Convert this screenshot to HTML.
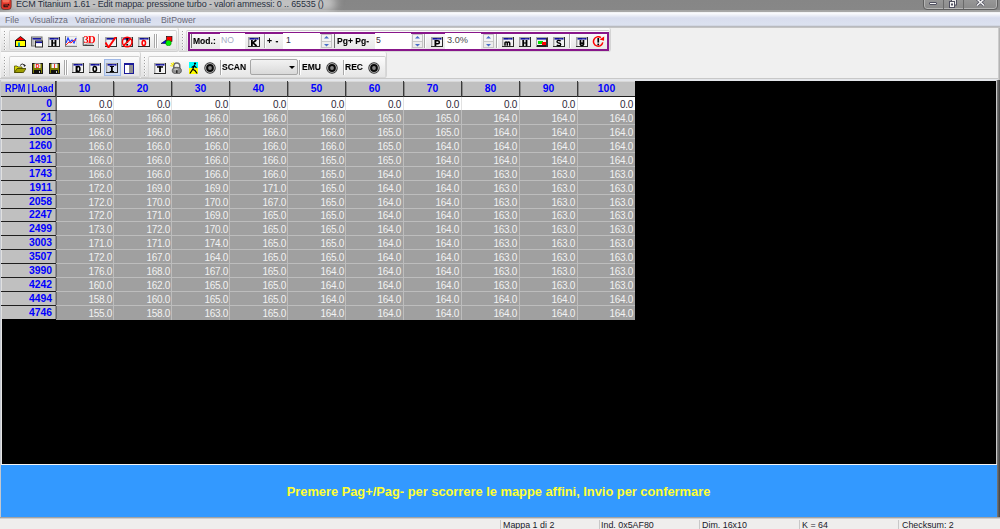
<!DOCTYPE html>
<html><head><meta charset="utf-8">
<style>
*{margin:0;padding:0;box-sizing:border-box}
html,body{width:1000px;height:529px;overflow:hidden;background:#f0f0f0;font-family:"Liberation Sans",sans-serif;position:relative}
.a{position:absolute}
#title{left:0;top:0;width:1000px;height:12px;background:linear-gradient(#868686 0,#878787 10px,#a4a4a4 10.5px,#a8a8a8 12px);overflow:hidden}
#ttext{left:16px;top:-1px;font-size:9px;letter-spacing:-0.14px;line-height:10px;color:#283040;white-space:nowrap}
#menu{left:0;top:12px;width:1000px;height:16px;background:linear-gradient(#e8e9ec 0,#fbfcfe 1px,#eef0f8 3px,#d8ddee 6px,#dce2f0 13px,#c8ccd6 14px,#a8a8a8 15px,#a8a8a8 16px)}
.mi{top:15px;font-size:8.7px;line-height:10px;color:#6a6a78;white-space:nowrap}
#tb{left:0;top:28px;width:1000px;height:52px;background:#f0f0f0}
.box{background:linear-gradient(#fbfbfb,#ececec 60%,#e2e2e2);border-right:1px solid #d4d4d4;border-bottom:1px solid #cfcfcf;border-radius:0 2px 3px 0}
.panel{background:linear-gradient(#fdfdfd,#f0f0f0 50%,#e6e6e6);border:1px solid #d8d8d8;border-top-color:#cfcfcf;border-radius:2px}
.grip{width:2px;background:repeating-linear-gradient(90deg,#a0a0a0 0,#a0a0a0 1px,#fff 1px,#fff 2px);-webkit-mask:repeating-linear-gradient(#000 0,#000 1px,transparent 1px,transparent 3px)}
.ht{color:#0000ff;font-weight:bold;font-size:10.4px;line-height:13px;white-space:nowrap}
.dt,.dt0{font-size:10px;letter-spacing:-0.3px;line-height:13px;text-align:right;white-space:nowrap}
.dt{color:#f2f2f2}
.dt0{color:#2e2838}
#black{left:2px;top:81px;width:994px;height:383px;background:#000}
#banner{left:1px;top:464px;width:996px;height:53px;background:#3399ff;border-top:1px solid #f4f4f4}
#btext{left:0;top:19px;width:995px;text-align:center;color:#ffff33;font-weight:bold;font-size:12.85px;line-height:16px}
#frameR{left:996px;top:80px;width:4px;height:437px;background:linear-gradient(90deg,#c8c8c8 0,#c8c8c8 1px,#7a7a7a 1px,#404040 4px)}
#frameL{left:0;top:80px;width:2px;height:438px;background:linear-gradient(90deg,#c4c8d0 0,#c4c8d0 1px,#e4e4e4 1px)}
#status{left:0;top:517px;width:1000px;height:12px;background:linear-gradient(#a4a4a4 0,#a4a4a4 1px,#cfcfcf 1px,#cfcfcf 2px,#efeeed 2px)}
.st{top:520px;font-size:8.9px;line-height:10px;color:#1a1a2a;white-space:nowrap}
.sd{top:520px;width:1px;height:9px;background:#c8c8c8}
.ico{filter:blur(0.25px)}
.vsep{width:2px;border-left:1px solid #a8a8a8;border-right:1px solid #ffffff}
.lbl{font-weight:bold;font-size:9.7px;color:#000;-webkit-text-stroke:0.1px #000;white-space:nowrap;line-height:10px;transform:scaleX(0.88);transform-origin:0 0}
.txt{font-size:8.6px;white-space:nowrap;line-height:10px}
.tbox{background:#fff}
.combo{border:1px solid #a6a6a6;border-radius:2px;background:linear-gradient(#f2f2f2,#e6e6e6 50%,#d9d9d9)}
</style></head><body>
<div id="title" class="a"><div class="a" style="left:6px;top:-6px;width:330px;height:18px;border-radius:9px;background:rgba(215,215,215,0.75);filter:blur(4px)"></div><div id="ttext" class="a">ECM Titanium 1.61 - Edit mappa: pressione turbo - valori ammessi: 0 .. 65535 ()</div></div>
<div id="menu" class="a"></div>
<svg class="a" style="left:0;top:0;filter:blur(0.3px)" width="13" height="11" viewBox="0 0 13 11"><rect x="1.2" y="-2" width="10" height="11.5" rx="3" fill="#e4362a" stroke="#5a2a24" stroke-width="0.7"/><rect x="2.5" y="-1" width="7" height="3.5" rx="1.5" fill="#f88a70" opacity="0.7"/><path d="M3.5,6.8 L8.2,6.8 M4.2,5 L8.8,5 L8.4,4 M4,4.5 Q3.8,6.8 4.5,6.8" fill="none" stroke="#1a1010" stroke-width="1.1"/></svg>
<div class="a" style="left:923px;top:-3px;width:75px;height:13px;border:1px solid #5e5e5e;border-radius:0 0 4px 4px;background:linear-gradient(#9a9a9a,#8a8a8a);box-shadow:inset 0 0 0 1px #b4b4b4"></div>
<div class="a" style="left:943px;top:0;width:1px;height:9px;background:#6a6a6a"></div>
<div class="a" style="left:963px;top:0;width:1px;height:9px;background:#6a6a6a"></div>
<div class="a" style="left:929px;top:2px;width:8px;height:3px;background:#f4f4f4;border:1px solid #505060;border-radius:1px"></div>
<svg class="a" style="left:948px;top:0" width="10" height="8" viewBox="0 0 10 8"><rect x="3.5" y="-1" width="5" height="6" fill="#e8e8e8" stroke="#505060"/><rect x="1.5" y="1.5" width="5" height="6" fill="#f4f4f4" stroke="#505060"/><rect x="3" y="3.5" width="2" height="2" fill="#505060"/></svg>
<svg class="a" style="left:975px;top:-1px" width="11" height="8" viewBox="0 0 11 8"><path d="M2,0 L9,6.5 M9,0 L2,6.5" stroke="#505060" stroke-width="3"/><path d="M2,0 L9,6.5 M9,0 L2,6.5" stroke="#f4f4f4" stroke-width="1.5"/></svg>
<div class="a mi" style="left:5px">File</div>
<div class="a mi" style="left:29px">Visualizza</div>
<div class="a mi" style="left:75px">Variazione manuale</div>
<div class="a mi" style="left:161px">BitPower</div>
<div id="tb" class="a"></div>
<div class="a" style="left:0;top:27px;width:1000px;height:1px;background:#c4c4c4"></div>
<div class="a" style="left:0;top:78px;width:1000px;height:1px;background:#c8c8c8"></div>
<div class="a" style="left:0;top:79px;width:1000px;height:2px;background:#e4e6ea"></div>
<div class="a box" style="left:1px;top:28px;width:178px;height:24px"></div>
<div class="a box" style="left:179px;top:28px;width:432px;height:24px"></div>
<div class="a box" style="left:1px;top:52px;width:140px;height:26px"></div>
<div class="a box" style="left:141px;top:52px;width:246px;height:26px"></div>
<div class="a grip" style="left:4px;top:31px;height:19px"></div>
<div class="a panel" style="left:9px;top:30px;width:168px;height:20px"></div>
<div class="a grip" style="left:182px;top:31px;height:19px"></div>
<div class="a panel" style="left:186px;top:30px;width:424px;height:22px"></div>
<div class="a" style="left:188px;top:32px;width:421px;height:19px;border:2px solid #88168a"></div>
<div class="a grip" style="left:4px;top:57px;height:19px"></div>
<div class="a panel" style="left:9px;top:56px;width:131px;height:21px"></div>
<div class="a grip" style="left:144px;top:57px;height:19px"></div>
<div class="a panel" style="left:148px;top:56px;width:238px;height:22px"></div>
<div id="black" class="a"></div>
<div class="a" style="left:998px;top:28px;width:2px;height:53px;background:linear-gradient(90deg,#d8d8d8,#a8a8a8)"></div>
<div id="frameL" class="a"></div>
<div id="frameR" class="a"></div>
<svg class="a ico" style="left:15px;top:36px" width="12" height="12" viewBox="0 0 12 12" ><polygon points="0.5,4.5 5.5,0.5 10.5,4.5" fill="#ff0000" stroke="#000" stroke-width="0.8"/><rect x="0.5" y="4.5" width="10" height="6" fill="#ffff00" stroke="#000" stroke-width="1"/><rect x="3" y="6.5" width="2" height="4" fill="#00a0a0"/></svg>
<svg class="a ico" style="left:31px;top:36px" width="12" height="12" viewBox="0 0 12 12" ><rect x="0.5" y="1" width="10.5" height="9" fill="#d0d0d0" stroke="#6a6a6a" stroke-width="1"/><rect x="1.5" y="2" width="8.5" height="1.6" fill="#1a1aa0"/><rect x="1.5" y="3.6" width="1" height="6" fill="#a0a0a0"/><rect x="4.5" y="5" width="7" height="6" fill="#fff" stroke="#282828" stroke-width="1"/><rect x="5" y="5.5" width="6" height="1.6" fill="#10109a"/></svg>
<svg class="a ico" style="left:48px;top:37px" width="12" height="10" viewBox="0 0 12 10" ><rect x="0" y="0" width="12" height="10" fill="#2a2a2a"/><rect x="0" y="0" width="11" height="9" fill="#a4a4a4"/><rect x="1" y="1" width="10" height="8" fill="#d4d4d4"/><rect x="2" y="1" width="9" height="8" fill="#f2f2f2"/><rect x="1.5" y="1" width="9" height="1.6" fill="#10109a"/><rect x="6" y="1.8" width="3" height="0.8" fill="#9a9ad0"/><g fill="#000"><rect x="3.3" y="3" width="1.8" height="6"/><rect x="6.6" y="3" width="1.8" height="6"/><rect x="4.5" y="5.4" width="2.5" height="1.2"/></g></svg>
<svg class="a ico" style="left:65px;top:36px" width="12" height="11" viewBox="0 0 12 11" ><rect x="0" y="0" width="12" height="11" fill="#d8d8d8"/><rect x="1" y="1" width="10" height="8" fill="#f0f0f0"/><rect x="0" y="0" width="1" height="11" fill="#707070"/><rect x="0" y="10" width="12" height="1" fill="#808080"/><polyline points="1,7 3,2 5,6 7,4 9,7 11,2" fill="none" stroke="#2040ff" stroke-width="1.2"/><polyline points="1,9 4,6 6,7 9,4 11,4" fill="none" stroke="#ff2020" stroke-width="1"/></svg>
<svg class="a ico" style="left:82px;top:35px" width="13" height="12" viewBox="0 0 13 12" ><path d="M1.2,2 L1.2,10.5 L12,10.5" fill="none" stroke="#303030" stroke-width="0.9"/><path d="M2,10 Q5,8.5 11,9" fill="none" stroke="#707070" stroke-width="0.8"/><text x="7.3" y="8.2" text-anchor="middle" font-family="Liberation Serif" font-weight="bold" font-size="10.5" fill="#ff0000" letter-spacing="-0.6">3D</text></svg>
<div class="a vsep" style="left:98px;top:34px;height:14px"></div>
<svg class="a ico" style="left:105px;top:37px" width="13" height="12" viewBox="0 0 13 12" ><rect x="0" y="0" width="12" height="10" fill="#303030"/><rect x="0" y="0" width="11" height="9" fill="#a4a4a4"/><rect x="1" y="1" width="10" height="8" fill="#d4d4d4"/><rect x="2" y="1" width="9" height="8" fill="#f0f0f0"/><rect x="1.5" y="1" width="8" height="1.6" fill="#10109a"/><path d="M0.5,5.5 L3.5,10.5 L11.5,-1" fill="none" stroke="#ff0000" stroke-width="1.9" stroke-linejoin="bevel"/></svg>
<svg class="a ico" style="left:121px;top:36px" width="13" height="12" viewBox="0 0 13 12" ><rect x="0.5" y="1" width="11.5" height="10" fill="#303030"/><rect x="0.5" y="1" width="10.5" height="9" fill="#a4a4a4"/><rect x="1.5" y="2" width="9.5" height="8" fill="#ececec"/><rect x="2" y="2" width="8" height="1.6" fill="#10109a"/><rect x="5.3" y="2" width="1.8" height="4.8" fill="#000"/><rect x="5.3" y="8" width="1.8" height="1.6" fill="#000"/><circle cx="6.2" cy="6" r="4.8" fill="none" stroke="#ff0000" stroke-width="1.5"/><path d="M9.6,2.6 L2.6,9.6" stroke="#ff0000" stroke-width="1.5"/></svg>
<svg class="a ico" style="left:138px;top:37px" width="12" height="10" viewBox="0 0 12 10" ><rect x="0" y="0" width="12" height="10" fill="#2a2a2a"/><rect x="0" y="0" width="11" height="9" fill="#a4a4a4"/><rect x="1" y="1" width="10" height="8" fill="#d4d4d4"/><rect x="2" y="1" width="9" height="8" fill="#f2f2f2"/><rect x="1.5" y="1" width="9" height="1.6" fill="#10109a"/><rect x="6" y="1.8" width="3" height="0.8" fill="#9a9ad0"/><g fill="#ff0000"><ellipse cx="5.8" cy="6" rx="1.7" ry="2.5" fill="none" stroke="#ff0000" stroke-width="1.5"/></g></svg>
<div class="a vsep" style="left:154px;top:34px;height:14px"></div>
<div class="a vsep" style="left:156px;top:34px;height:14px"></div>
<svg class="a ico" style="left:161px;top:36px" width="12" height="11" viewBox="0 0 12 11" ><polygon points="0,7.5 5,4 5,7.5" fill="#0000ff" stroke="#000" stroke-width="0.5"/><rect x="5.5" y="0.5" width="5.5" height="5" fill="#ff0000" stroke="#000" stroke-width="0.6"/><circle cx="7.5" cy="7" r="2.8" fill="#00ee00" stroke="#006000" stroke-width="0.4"/></svg>
<div class="a" style="left:191px;top:34px;width:1px;height:14px;background:#707070"></div>
<div class="a lbl" style="left:193px;top:36px">Mod.:</div>
<div class="a tbox" style="left:220px;top:33px;width:25px;height:16px"></div>
<div class="a txt" style="left:221px;top:35px;color:#a4acc4">NO</div>
<svg class="a ico" style="left:248px;top:37px" width="12" height="10" viewBox="0 0 12 10" ><rect x="0" y="0" width="12" height="10" fill="#2a2a2a"/><rect x="0" y="0" width="11" height="9" fill="#a4a4a4"/><rect x="1" y="1" width="10" height="8" fill="#d4d4d4"/><rect x="2" y="1" width="9" height="8" fill="#f2f2f2"/><rect x="1.5" y="1" width="9" height="1.6" fill="#10109a"/><rect x="6" y="1.8" width="3" height="0.8" fill="#9a9ad0"/><g fill="#000"><rect x="3" y="3" width="1.8" height="6"/><path d="M4.2,6.3 L8.3,3 M4.8,5.6 L8.6,9" stroke="#000" stroke-width="1.7" fill="none"/></g></svg>
<div class="a vsep" style="left:264px;top:34px;height:14px"></div>
<div class="a lbl" style="left:267px;top:36px;letter-spacing:0.6px">+ -</div>
<div class="a tbox" style="left:283px;top:33px;width:37px;height:16px"></div>
<div class="a txt" style="left:286px;top:35px;color:#2a2a3a">1</div>
<svg class="a ico" style="left:321px;top:34px" width="11" height="14" viewBox="0 0 11 14" ><rect x="0.5" y="0.5" width="10" height="13" fill="#ececec" stroke="#c4c4c4"/><rect x="1" y="1" width="9" height="6" fill="#f4f4f4"/><rect x="1" y="7" width="9" height="1" fill="#c8c8c8"/><polygon points="3.0,4.5 8.0,4.5 5.5,2" fill="#4a6ec8"/><polygon points="3.0,10 8.0,10 5.5,12.5" fill="#4a6ec8"/></svg>
<div class="a" style="left:334px;top:34px;width:1px;height:14px;background:#707070"></div>
<div class="a lbl" style="left:337px;top:36px">Pg+ Pg-</div>
<div class="a tbox" style="left:375px;top:33px;width:36px;height:16px"></div>
<div class="a txt" style="left:376px;top:35px;color:#3a2a3a">5</div>
<svg class="a ico" style="left:412px;top:34px" width="11" height="14" viewBox="0 0 11 14" ><rect x="0.5" y="0.5" width="10" height="13" fill="#ececec" stroke="#c4c4c4"/><rect x="1" y="1" width="9" height="6" fill="#f4f4f4"/><rect x="1" y="7" width="9" height="1" fill="#c8c8c8"/><polygon points="3.0,4.5 8.0,4.5 5.5,2" fill="#4a6ec8"/><polygon points="3.0,10 8.0,10 5.5,12.5" fill="#4a6ec8"/></svg>
<div class="a vsep" style="left:424px;top:34px;height:14px"></div>
<svg class="a ico" style="left:431px;top:37px" width="12" height="10" viewBox="0 0 12 10" ><rect x="0" y="0" width="12" height="10" fill="#2a2a2a"/><rect x="0" y="0" width="11" height="9" fill="#a4a4a4"/><rect x="1" y="1" width="10" height="8" fill="#d4d4d4"/><rect x="2" y="1" width="9" height="8" fill="#f2f2f2"/><rect x="1.5" y="1" width="9" height="1.6" fill="#10109a"/><rect x="6" y="1.8" width="3" height="0.8" fill="#9a9ad0"/><g fill="#000"><rect x="3.5" y="3" width="1.8" height="6"/><path d="M4.5,3.8 L6.8,3.8 Q8.4,3.8 8.4,5.3 Q8.4,6.8 6.8,6.8 L4.5,6.8" fill="none" stroke="#000" stroke-width="1.5"/></g></svg>
<div class="a tbox" style="left:445px;top:33px;width:36px;height:16px"></div>
<div class="a txt" style="left:447px;top:35px;color:#4a4a4a;font-size:9.2px">3.0%</div>
<svg class="a ico" style="left:483px;top:34px" width="11" height="14" viewBox="0 0 11 14" ><rect x="0.5" y="0.5" width="10" height="13" fill="#ececec" stroke="#c4c4c4"/><rect x="1" y="1" width="9" height="6" fill="#f4f4f4"/><rect x="1" y="7" width="9" height="1" fill="#c8c8c8"/><polygon points="3.0,4.5 8.0,4.5 5.5,2" fill="#4a6ec8"/><polygon points="3.0,10 8.0,10 5.5,12.5" fill="#4a6ec8"/></svg>
<div class="a vsep" style="left:496px;top:34px;height:14px"></div>
<svg class="a ico" style="left:502px;top:37px" width="12" height="10" viewBox="0 0 12 10" ><rect x="0" y="0" width="12" height="10" fill="#2a2a2a"/><rect x="0" y="0" width="11" height="9" fill="#a4a4a4"/><rect x="1" y="1" width="10" height="8" fill="#d4d4d4"/><rect x="2" y="1" width="9" height="8" fill="#f2f2f2"/><rect x="1.5" y="1" width="9" height="1.6" fill="#10109a"/><rect x="6" y="1.8" width="3" height="0.8" fill="#9a9ad0"/><g fill="#000"><path d="M3,8.8 L3,5.8 Q3,5 4.1,5 Q5.3,5 5.3,5.9 L5.3,8.8 M5.3,5.9 Q5.3,5 6.5,5 Q7.7,5 7.7,5.9 L7.7,8.8" fill="none" stroke="#000" stroke-width="1.5"/></g></svg>
<svg class="a ico" style="left:519px;top:37px" width="12" height="10" viewBox="0 0 12 10" ><rect x="0" y="0" width="12" height="10" fill="#2a2a2a"/><rect x="0" y="0" width="11" height="9" fill="#a4a4a4"/><rect x="1" y="1" width="10" height="8" fill="#d4d4d4"/><rect x="2" y="1" width="9" height="8" fill="#f2f2f2"/><rect x="1.5" y="1" width="9" height="1.6" fill="#10109a"/><rect x="6" y="1.8" width="3" height="0.8" fill="#9a9ad0"/><g fill="#000"><rect x="3.3" y="3" width="1.8" height="6"/><rect x="6.6" y="3" width="1.8" height="6"/><rect x="4.5" y="5.4" width="2.5" height="1.2"/></g></svg>
<svg class="a ico" style="left:536px;top:37px" width="12" height="10" viewBox="0 0 12 10" ><rect x="0" y="0" width="12" height="10" fill="#7a7a7a"/><rect x="0" y="0" width="11" height="9" fill="#a8a8a8"/><rect x="1" y="8" width="11" height="2" fill="#202020"/><rect x="10" y="1" width="2" height="9" fill="#303030"/><rect x="1" y="1" width="9" height="7" fill="#f0f0f0"/><rect x="1" y="1" width="9" height="1.6" fill="#1a1aa0"/><rect x="2" y="4" width="5" height="3" fill="#00e000"/><rect x="6" y="5" width="4" height="3" fill="#ff0000"/></svg>
<svg class="a ico" style="left:553px;top:37px" width="12" height="10" viewBox="0 0 12 10" ><rect x="0" y="0" width="12" height="10" fill="#2a2a2a"/><rect x="0" y="0" width="11" height="9" fill="#a4a4a4"/><rect x="1" y="1" width="10" height="8" fill="#d4d4d4"/><rect x="2" y="1" width="9" height="8" fill="#f2f2f2"/><rect x="1.5" y="1" width="9" height="1.6" fill="#10109a"/><rect x="6" y="1.8" width="3" height="0.8" fill="#9a9ad0"/><g fill="#000"><path d="M7.6,4.2 Q7.2,3.4 5.8,3.4 Q4,3.4 4,4.7 Q4,5.8 5.8,6 Q7.7,6.2 7.7,7.4 Q7.7,8.6 5.8,8.6 Q4.3,8.6 3.8,7.8" fill="none" stroke="#000" stroke-width="1.4"/></g></svg>
<div class="a vsep" style="left:569px;top:34px;height:14px"></div>
<svg class="a ico" style="left:576px;top:37px" width="12" height="10" viewBox="0 0 12 10" ><rect x="0" y="0" width="12" height="10" fill="#2a2a2a"/><rect x="0" y="0" width="11" height="9" fill="#a4a4a4"/><rect x="1" y="1" width="10" height="8" fill="#d4d4d4"/><rect x="2" y="1" width="9" height="8" fill="#f2f2f2"/><rect x="1.5" y="1" width="9" height="1.6" fill="#10109a"/><rect x="6" y="1.8" width="3" height="0.8" fill="#9a9ad0"/><g fill="#000"><rect x="3.6" y="3" width="1.7" height="4.5"/><rect x="6.6" y="3" width="1.7" height="4.5"/><ellipse cx="5.95" cy="7.3" rx="1.6" ry="1.2" fill="none" stroke="#000" stroke-width="1.5"/></g></svg>
<svg class="a ico" style="left:592px;top:36px" width="13" height="12" viewBox="0 0 13 12" ><path d="M10.8,6.4 A4.7,4.7 0 1 1 8.9,1.6" fill="none" stroke="#ff0000" stroke-width="1.5"/><polygon points="7.6,3.4 12.2,0.4 12,4.8" fill="#ff0000"/><rect x="5.4" y="2" width="1.7" height="4.6" fill="#000"/><rect x="5.4" y="7.6" width="1.7" height="1.7" fill="#000"/></svg>
<svg class="a ico" style="left:14px;top:63px" width="12" height="10" viewBox="0 0 12 10" ><path d="M0.5,3 L3,3 L4,4 L8,4 L8,9.5 L0.5,9.5 Z" fill="#d8d800" stroke="#505000" stroke-width="0.8"/><path d="M0.5,9.5 L3,5.5 L12,5.5 L9.5,9.5 Z" fill="#a0a000" stroke="#404000" stroke-width="0.8"/><path d="M6,2.5 Q8,-0.5 10.5,2" fill="none" stroke="#303030" stroke-width="1"/><polygon points="9.5,1 12,2.5 10,4" fill="#202020"/></svg>
<svg class="a ico" style="left:32px;top:63px" width="11" height="11" viewBox="0 0 11 11" ><rect x="0" y="0" width="11" height="11" fill="#1a1a1a"/><rect x="1" y="1" width="9" height="9" fill="#7a7a00"/><rect x="2.5" y="0.5" width="6" height="4.5" fill="#f0f0f0"/><text x="5.5" y="4.8" text-anchor="middle" font-family="Liberation Sans" font-weight="bold" font-size="5.5" fill="#ff0000">D</text><rect x="2" y="7" width="7" height="4" fill="#101010"/><rect x="7" y="8" width="1" height="2" fill="#c0c0c0"/></svg>
<svg class="a ico" style="left:49px;top:63px" width="11" height="11" viewBox="0 0 11 11" ><rect x="0" y="0" width="11" height="11" fill="#1a1a1a"/><rect x="1" y="1" width="9" height="9" fill="#7a7a00"/><rect x="2.5" y="0.5" width="6" height="4.5" fill="#f0f0f0"/><text x="5.5" y="4.8" text-anchor="middle" font-family="Liberation Sans" font-weight="bold" font-size="5.5" fill="#ff0000">I</text><rect x="2" y="7" width="7" height="4" fill="#101010"/><rect x="7" y="8" width="1" height="2" fill="#c0c0c0"/></svg>
<div class="a vsep" style="left:64px;top:60px;height:15px"></div>
<div class="a vsep" style="left:66px;top:60px;height:15px"></div>
<svg class="a ico" style="left:72px;top:63px" width="12" height="10" viewBox="0 0 12 10" ><rect x="0" y="0" width="12" height="10" fill="#2a2a2a"/><rect x="0" y="0" width="11" height="9" fill="#a4a4a4"/><rect x="1" y="1" width="10" height="8" fill="#d4d4d4"/><rect x="2" y="1" width="9" height="8" fill="#f2f2f2"/><rect x="1.5" y="1" width="9" height="1.6" fill="#10109a"/><rect x="6" y="1.8" width="3" height="0.8" fill="#9a9ad0"/><g fill="#000"><rect x="3.6" y="3" width="1.4" height="6"/><ellipse cx="6.3" cy="6" rx="1.6" ry="2.4" fill="none" stroke="#000" stroke-width="1.5"/></g></svg>
<svg class="a ico" style="left:89px;top:63px" width="12" height="10" viewBox="0 0 12 10" ><rect x="0" y="0" width="12" height="10" fill="#2a2a2a"/><rect x="0" y="0" width="11" height="9" fill="#a4a4a4"/><rect x="1" y="1" width="10" height="8" fill="#d4d4d4"/><rect x="2" y="1" width="9" height="8" fill="#f2f2f2"/><rect x="1.5" y="1" width="9" height="1.6" fill="#10109a"/><rect x="6" y="1.8" width="3" height="0.8" fill="#9a9ad0"/><g fill="#000"><ellipse cx="5.8" cy="6" rx="1.7" ry="2.5" fill="none" stroke="#000" stroke-width="1.5"/></g></svg>
<div class="a" style="left:104px;top:59px;width:17px;height:17px;background:#cfdcf3;border:1px solid #9fb8e6"></div>
<svg class="a ico" style="left:106px;top:63px" width="12" height="10" viewBox="0 0 12 10" ><rect x="0" y="0" width="12" height="10" fill="#2a2a2a"/><rect x="0" y="0" width="11" height="9" fill="#a4a4a4"/><rect x="1" y="1" width="10" height="8" fill="#d4d4d4"/><rect x="2" y="1" width="9" height="8" fill="#d8e0f0"/><rect x="1.5" y="1" width="9" height="1.6" fill="#10109a"/><rect x="6" y="1.8" width="3" height="0.8" fill="#9a9ad0"/><g fill="#000"><rect x="5" y="3" width="1.8" height="6"/><rect x="3.8" y="3" width="4.2" height="1"/><rect x="3.8" y="8" width="4.2" height="1"/></g></svg>
<svg class="a ico" style="left:124px;top:63px" width="10" height="11" viewBox="0 0 10 11" ><rect x="0" y="0" width="10" height="11" fill="#1a1a9a"/><rect x="1" y="2" width="4" height="8" fill="#ffffff"/><rect x="5" y="2" width="4" height="8" fill="#909090"/></svg>
<svg class="a ico" style="left:154px;top:63px" width="12" height="11" viewBox="0 0 12 11" ><rect x="0" y="0" width="12" height="11" fill="#2a2a2a"/><rect x="0" y="0" width="11" height="10" fill="#a4a4a4"/><rect x="1" y="1" width="10" height="9" fill="#d4d4d4"/><rect x="2" y="1" width="9" height="9" fill="#f2f2f2"/><rect x="1.5" y="1" width="9" height="1.6" fill="#10109a"/><rect x="6" y="1.8" width="3" height="0.8" fill="#9a9ad0"/><g fill="#000"><rect x="3" y="3.2" width="6" height="1.5"/><rect x="5.1" y="3.2" width="1.8" height="5.8"/></g></svg>
<svg class="a ico" style="left:170px;top:62px" width="12" height="12" viewBox="0 0 12 12" ><path d="M3.8,6 L3.8,3.8 Q3.8,1 6.8,1 Q9.8,1 9.8,3.8 L9.8,6" fill="none" stroke="#6a6a6a" stroke-width="1.5"/><ellipse cx="6.8" cy="8.6" rx="4.6" ry="3.3" fill="#8e8e8e" stroke="#404040" stroke-width="0.7"/><ellipse cx="6" cy="7.5" rx="2" ry="1" fill="#c8c8c8" opacity="0.8"/><rect x="6.1" y="8.2" width="1.4" height="2.8" fill="#202020"/><path d="M0.3,3.5 L2.8,4.3 M1,1.2 L3,3.2 M3.2,0.2 L3.5,2.6" stroke="#f4e800" stroke-width="1.1"/></svg>
<svg class="a ico" style="left:189px;top:62px" width="9" height="12" viewBox="0 0 9 12" ><rect x="0" y="0" width="9" height="6" fill="#00ffff"/><rect x="0" y="6" width="9" height="6" fill="#ffff00"/><circle cx="6" cy="1.6" r="1.1" fill="#000"/><path d="M5.6,3 L3.8,7.2 L1.2,11 M3.8,7.2 L6.2,8.8 L7.8,11 M5.2,3.8 L7.2,5.6 M5.2,3.8 L3,5.2" fill="none" stroke="#000" stroke-width="1.2" stroke-linecap="round"/></svg>
<svg class="a" style="left:204px;top:62px" width="12" height="12" viewBox="0 0 12 12"><circle cx="6" cy="6" r="5.7" fill="#282828"/><circle cx="6" cy="6" r="4.8" fill="#c4c4c4"/><circle cx="6" cy="6" r="3.9" fill="#0a0a0a"/><circle cx="6" cy="6" r="1.9" fill="#868686"/></svg>
<div class="a vsep" style="left:220px;top:60px;height:15px"></div>
<div class="a lbl" style="left:222px;top:62px">SCAN</div>
<div class="a combo" style="left:250px;top:59px;width:48px;height:16px"></div>
<div class="a" style="left:289px;top:66px;width:0;height:0;border-left:3px solid transparent;border-right:3px solid transparent;border-top:3px solid #000"></div>
<div class="a vsep" style="left:299px;top:60px;height:15px"></div>
<div class="a lbl" style="left:302px;top:62px">EMU</div>
<svg class="a" style="left:326px;top:62px" width="12" height="12" viewBox="0 0 12 12"><circle cx="6" cy="6" r="5.7" fill="#282828"/><circle cx="6" cy="6" r="4.8" fill="#c4c4c4"/><circle cx="6" cy="6" r="3.9" fill="#0a0a0a"/><circle cx="6" cy="6" r="1.9" fill="#868686"/></svg>
<div class="a vsep" style="left:343px;top:60px;height:15px"></div>
<div class="a lbl" style="left:345px;top:62px">REC</div>
<svg class="a" style="left:368px;top:62px" width="12" height="12" viewBox="0 0 12 12"><circle cx="6" cy="6" r="5.7" fill="#282828"/><circle cx="6" cy="6" r="4.8" fill="#c4c4c4"/><circle cx="6" cy="6" r="3.9" fill="#0a0a0a"/><circle cx="6" cy="6" r="1.9" fill="#868686"/></svg>
<div class="a" style="left:1px;top:81px;width:634px;height:15px;background:#c0c0c0;border-top:1px solid #d8d8d8"></div>
<div class="a" style="left:1px;top:96px;width:634px;height:1px;background:#1e1e1e"></div>
<div class="a" style="left:1px;top:97px;width:54px;height:222px;background:#c0c0c0;border-left:1px solid #e0e0e0"></div>
<div class="a" style="left:56px;top:97px;width:579px;height:13px;background:#fff"></div>
<div class="a" style="left:56px;top:110px;width:579px;height:210px;background:#a0a0a0"></div>
<div class="a" style="left:55px;top:81px;width:1px;height:16px;background:#3a3a3a"></div>
<div class="a" style="left:56px;top:97px;width:1px;height:222px;background:#6c6c6c"></div>
<div class="a" style="left:55px;top:97px;width:1px;height:222px;background:#8e8e8e"></div>
<div class="a" style="left:56px;top:81px;width:1px;height:16px;background:#606060"></div>
<div class="a" style="left:113px;top:81px;width:1px;height:16px;background:#3a3a3a"></div>
<div class="a" style="left:114px;top:82px;width:1px;height:14px;background:#8a8a8a"></div>
<div class="a" style="left:113px;top:97px;width:1px;height:13px;background:#e2e2e2"></div>
<div class="a" style="left:113px;top:110px;width:1px;height:210px;background:#bdbdbd"></div>
<div class="a" style="left:171px;top:81px;width:1px;height:16px;background:#3a3a3a"></div>
<div class="a" style="left:172px;top:82px;width:1px;height:14px;background:#8a8a8a"></div>
<div class="a" style="left:171px;top:97px;width:1px;height:13px;background:#e2e2e2"></div>
<div class="a" style="left:171px;top:110px;width:1px;height:210px;background:#bdbdbd"></div>
<div class="a" style="left:229px;top:81px;width:1px;height:16px;background:#3a3a3a"></div>
<div class="a" style="left:230px;top:82px;width:1px;height:14px;background:#8a8a8a"></div>
<div class="a" style="left:229px;top:97px;width:1px;height:13px;background:#e2e2e2"></div>
<div class="a" style="left:229px;top:110px;width:1px;height:210px;background:#bdbdbd"></div>
<div class="a" style="left:287px;top:81px;width:1px;height:16px;background:#3a3a3a"></div>
<div class="a" style="left:288px;top:82px;width:1px;height:14px;background:#8a8a8a"></div>
<div class="a" style="left:287px;top:97px;width:1px;height:13px;background:#e2e2e2"></div>
<div class="a" style="left:287px;top:110px;width:1px;height:210px;background:#bdbdbd"></div>
<div class="a" style="left:345px;top:81px;width:1px;height:16px;background:#3a3a3a"></div>
<div class="a" style="left:346px;top:82px;width:1px;height:14px;background:#8a8a8a"></div>
<div class="a" style="left:345px;top:97px;width:1px;height:13px;background:#e2e2e2"></div>
<div class="a" style="left:345px;top:110px;width:1px;height:210px;background:#bdbdbd"></div>
<div class="a" style="left:403px;top:81px;width:1px;height:16px;background:#3a3a3a"></div>
<div class="a" style="left:404px;top:82px;width:1px;height:14px;background:#8a8a8a"></div>
<div class="a" style="left:403px;top:97px;width:1px;height:13px;background:#e2e2e2"></div>
<div class="a" style="left:403px;top:110px;width:1px;height:210px;background:#bdbdbd"></div>
<div class="a" style="left:461px;top:81px;width:1px;height:16px;background:#3a3a3a"></div>
<div class="a" style="left:462px;top:82px;width:1px;height:14px;background:#8a8a8a"></div>
<div class="a" style="left:461px;top:97px;width:1px;height:13px;background:#e2e2e2"></div>
<div class="a" style="left:461px;top:110px;width:1px;height:210px;background:#bdbdbd"></div>
<div class="a" style="left:519px;top:81px;width:1px;height:16px;background:#3a3a3a"></div>
<div class="a" style="left:520px;top:82px;width:1px;height:14px;background:#8a8a8a"></div>
<div class="a" style="left:519px;top:97px;width:1px;height:13px;background:#e2e2e2"></div>
<div class="a" style="left:519px;top:110px;width:1px;height:210px;background:#bdbdbd"></div>
<div class="a" style="left:577px;top:81px;width:1px;height:16px;background:#3a3a3a"></div>
<div class="a" style="left:578px;top:82px;width:1px;height:14px;background:#8a8a8a"></div>
<div class="a" style="left:577px;top:97px;width:1px;height:13px;background:#e2e2e2"></div>
<div class="a" style="left:577px;top:110px;width:1px;height:210px;background:#bdbdbd"></div>
<div class="a" style="left:1px;top:110px;width:56px;height:1px;background:#1e1e1e"></div>
<div class="a" style="left:1px;top:124px;width:56px;height:1px;background:#1e1e1e"></div>
<div class="a" style="left:56px;top:124px;width:579px;height:1px;background:#bdbdbd"></div>
<div class="a" style="left:1px;top:138px;width:56px;height:1px;background:#1e1e1e"></div>
<div class="a" style="left:56px;top:138px;width:579px;height:1px;background:#bdbdbd"></div>
<div class="a" style="left:1px;top:152px;width:56px;height:1px;background:#1e1e1e"></div>
<div class="a" style="left:56px;top:152px;width:579px;height:1px;background:#bdbdbd"></div>
<div class="a" style="left:1px;top:166px;width:56px;height:1px;background:#1e1e1e"></div>
<div class="a" style="left:56px;top:166px;width:579px;height:1px;background:#bdbdbd"></div>
<div class="a" style="left:1px;top:180px;width:56px;height:1px;background:#1e1e1e"></div>
<div class="a" style="left:56px;top:180px;width:579px;height:1px;background:#bdbdbd"></div>
<div class="a" style="left:1px;top:194px;width:56px;height:1px;background:#1e1e1e"></div>
<div class="a" style="left:56px;top:194px;width:579px;height:1px;background:#bdbdbd"></div>
<div class="a" style="left:1px;top:208px;width:56px;height:1px;background:#1e1e1e"></div>
<div class="a" style="left:56px;top:208px;width:579px;height:1px;background:#bdbdbd"></div>
<div class="a" style="left:1px;top:221px;width:56px;height:1px;background:#1e1e1e"></div>
<div class="a" style="left:56px;top:221px;width:579px;height:1px;background:#bdbdbd"></div>
<div class="a" style="left:1px;top:235px;width:56px;height:1px;background:#1e1e1e"></div>
<div class="a" style="left:56px;top:235px;width:579px;height:1px;background:#bdbdbd"></div>
<div class="a" style="left:1px;top:249px;width:56px;height:1px;background:#1e1e1e"></div>
<div class="a" style="left:56px;top:249px;width:579px;height:1px;background:#bdbdbd"></div>
<div class="a" style="left:1px;top:263px;width:56px;height:1px;background:#1e1e1e"></div>
<div class="a" style="left:56px;top:263px;width:579px;height:1px;background:#bdbdbd"></div>
<div class="a" style="left:1px;top:277px;width:56px;height:1px;background:#1e1e1e"></div>
<div class="a" style="left:56px;top:277px;width:579px;height:1px;background:#bdbdbd"></div>
<div class="a" style="left:1px;top:291px;width:56px;height:1px;background:#1e1e1e"></div>
<div class="a" style="left:56px;top:291px;width:579px;height:1px;background:#bdbdbd"></div>
<div class="a" style="left:1px;top:305px;width:56px;height:1px;background:#1e1e1e"></div>
<div class="a" style="left:56px;top:305px;width:579px;height:1px;background:#bdbdbd"></div>
<div class="a ht" style="left:5px;top:82px;transform:scaleX(0.89);transform-origin:0 0">RPM<span style="margin:0 1.6px 0 2.2px">|</span>Load</div>
<div class="a ht" style="left:56px;top:82px;width:57px;text-align:center">10</div>
<div class="a ht" style="left:114px;top:82px;width:57px;text-align:center">20</div>
<div class="a ht" style="left:172px;top:82px;width:57px;text-align:center">30</div>
<div class="a ht" style="left:230px;top:82px;width:57px;text-align:center">40</div>
<div class="a ht" style="left:288px;top:82px;width:57px;text-align:center">50</div>
<div class="a ht" style="left:346px;top:82px;width:57px;text-align:center">60</div>
<div class="a ht" style="left:404px;top:82px;width:57px;text-align:center">70</div>
<div class="a ht" style="left:462px;top:82px;width:57px;text-align:center">80</div>
<div class="a ht" style="left:520px;top:82px;width:57px;text-align:center">90</div>
<div class="a ht" style="left:578px;top:82px;width:57px;text-align:center">100</div>
<div class="a ht" style="left:1px;top:97px;width:51px;text-align:right">0</div>
<div class="a dt0" style="left:57px;top:97.5px;width:55px">0.0</div>
<div class="a dt0" style="left:115px;top:97.5px;width:55px">0.0</div>
<div class="a dt0" style="left:173px;top:97.5px;width:55px">0.0</div>
<div class="a dt0" style="left:231px;top:97.5px;width:55px">0.0</div>
<div class="a dt0" style="left:289px;top:97.5px;width:55px">0.0</div>
<div class="a dt0" style="left:346px;top:97.5px;width:55px">0.0</div>
<div class="a dt0" style="left:404px;top:97.5px;width:55px">0.0</div>
<div class="a dt0" style="left:462px;top:97.5px;width:55px">0.0</div>
<div class="a dt0" style="left:520px;top:97.5px;width:55px">0.0</div>
<div class="a dt0" style="left:578px;top:97.5px;width:55px">0.0</div>
<div class="a ht" style="left:1px;top:111px;width:51px;text-align:right">21</div>
<div class="a dt" style="left:57px;top:111.5px;width:55px">166.0</div>
<div class="a dt" style="left:115px;top:111.5px;width:55px">166.0</div>
<div class="a dt" style="left:173px;top:111.5px;width:55px">166.0</div>
<div class="a dt" style="left:231px;top:111.5px;width:55px">166.0</div>
<div class="a dt" style="left:289px;top:111.5px;width:55px">166.0</div>
<div class="a dt" style="left:346px;top:111.5px;width:55px">165.0</div>
<div class="a dt" style="left:404px;top:111.5px;width:55px">165.0</div>
<div class="a dt" style="left:462px;top:111.5px;width:55px">164.0</div>
<div class="a dt" style="left:520px;top:111.5px;width:55px">164.0</div>
<div class="a dt" style="left:578px;top:111.5px;width:55px">164.0</div>
<div class="a ht" style="left:1px;top:125px;width:51px;text-align:right">1008</div>
<div class="a dt" style="left:57px;top:125.5px;width:55px">166.0</div>
<div class="a dt" style="left:115px;top:125.5px;width:55px">166.0</div>
<div class="a dt" style="left:173px;top:125.5px;width:55px">166.0</div>
<div class="a dt" style="left:231px;top:125.5px;width:55px">166.0</div>
<div class="a dt" style="left:289px;top:125.5px;width:55px">166.0</div>
<div class="a dt" style="left:346px;top:125.5px;width:55px">165.0</div>
<div class="a dt" style="left:404px;top:125.5px;width:55px">165.0</div>
<div class="a dt" style="left:462px;top:125.5px;width:55px">164.0</div>
<div class="a dt" style="left:520px;top:125.5px;width:55px">164.0</div>
<div class="a dt" style="left:578px;top:125.5px;width:55px">164.0</div>
<div class="a ht" style="left:1px;top:139px;width:51px;text-align:right">1260</div>
<div class="a dt" style="left:57px;top:139.5px;width:55px">166.0</div>
<div class="a dt" style="left:115px;top:139.5px;width:55px">166.0</div>
<div class="a dt" style="left:173px;top:139.5px;width:55px">166.0</div>
<div class="a dt" style="left:231px;top:139.5px;width:55px">166.0</div>
<div class="a dt" style="left:289px;top:139.5px;width:55px">166.0</div>
<div class="a dt" style="left:346px;top:139.5px;width:55px">165.0</div>
<div class="a dt" style="left:404px;top:139.5px;width:55px">164.0</div>
<div class="a dt" style="left:462px;top:139.5px;width:55px">164.0</div>
<div class="a dt" style="left:520px;top:139.5px;width:55px">164.0</div>
<div class="a dt" style="left:578px;top:139.5px;width:55px">164.0</div>
<div class="a ht" style="left:1px;top:153px;width:51px;text-align:right">1491</div>
<div class="a dt" style="left:57px;top:153.5px;width:55px">166.0</div>
<div class="a dt" style="left:115px;top:153.5px;width:55px">166.0</div>
<div class="a dt" style="left:173px;top:153.5px;width:55px">166.0</div>
<div class="a dt" style="left:231px;top:153.5px;width:55px">166.0</div>
<div class="a dt" style="left:289px;top:153.5px;width:55px">165.0</div>
<div class="a dt" style="left:346px;top:153.5px;width:55px">165.0</div>
<div class="a dt" style="left:404px;top:153.5px;width:55px">164.0</div>
<div class="a dt" style="left:462px;top:153.5px;width:55px">164.0</div>
<div class="a dt" style="left:520px;top:153.5px;width:55px">164.0</div>
<div class="a dt" style="left:578px;top:153.5px;width:55px">164.0</div>
<div class="a ht" style="left:1px;top:167px;width:51px;text-align:right">1743</div>
<div class="a dt" style="left:57px;top:167.5px;width:55px">166.0</div>
<div class="a dt" style="left:115px;top:167.5px;width:55px">166.0</div>
<div class="a dt" style="left:173px;top:167.5px;width:55px">166.0</div>
<div class="a dt" style="left:231px;top:167.5px;width:55px">166.0</div>
<div class="a dt" style="left:289px;top:167.5px;width:55px">165.0</div>
<div class="a dt" style="left:346px;top:167.5px;width:55px">164.0</div>
<div class="a dt" style="left:404px;top:167.5px;width:55px">164.0</div>
<div class="a dt" style="left:462px;top:167.5px;width:55px">163.0</div>
<div class="a dt" style="left:520px;top:167.5px;width:55px">163.0</div>
<div class="a dt" style="left:578px;top:167.5px;width:55px">163.0</div>
<div class="a ht" style="left:1px;top:181px;width:51px;text-align:right">1911</div>
<div class="a dt" style="left:57px;top:181.5px;width:55px">172.0</div>
<div class="a dt" style="left:115px;top:181.5px;width:55px">169.0</div>
<div class="a dt" style="left:173px;top:181.5px;width:55px">169.0</div>
<div class="a dt" style="left:231px;top:181.5px;width:55px">171.0</div>
<div class="a dt" style="left:289px;top:181.5px;width:55px">165.0</div>
<div class="a dt" style="left:346px;top:181.5px;width:55px">164.0</div>
<div class="a dt" style="left:404px;top:181.5px;width:55px">164.0</div>
<div class="a dt" style="left:462px;top:181.5px;width:55px">163.0</div>
<div class="a dt" style="left:520px;top:181.5px;width:55px">163.0</div>
<div class="a dt" style="left:578px;top:181.5px;width:55px">163.0</div>
<div class="a ht" style="left:1px;top:195px;width:51px;text-align:right">2058</div>
<div class="a dt" style="left:57px;top:195.5px;width:55px">172.0</div>
<div class="a dt" style="left:115px;top:195.5px;width:55px">170.0</div>
<div class="a dt" style="left:173px;top:195.5px;width:55px">170.0</div>
<div class="a dt" style="left:231px;top:195.5px;width:55px">167.0</div>
<div class="a dt" style="left:289px;top:195.5px;width:55px">165.0</div>
<div class="a dt" style="left:346px;top:195.5px;width:55px">164.0</div>
<div class="a dt" style="left:404px;top:195.5px;width:55px">164.0</div>
<div class="a dt" style="left:462px;top:195.5px;width:55px">163.0</div>
<div class="a dt" style="left:520px;top:195.5px;width:55px">163.0</div>
<div class="a dt" style="left:578px;top:195.5px;width:55px">163.0</div>
<div class="a ht" style="left:1px;top:208px;width:51px;text-align:right">2247</div>
<div class="a dt" style="left:57px;top:208.5px;width:55px">172.0</div>
<div class="a dt" style="left:115px;top:208.5px;width:55px">171.0</div>
<div class="a dt" style="left:173px;top:208.5px;width:55px">169.0</div>
<div class="a dt" style="left:231px;top:208.5px;width:55px">165.0</div>
<div class="a dt" style="left:289px;top:208.5px;width:55px">165.0</div>
<div class="a dt" style="left:346px;top:208.5px;width:55px">164.0</div>
<div class="a dt" style="left:404px;top:208.5px;width:55px">164.0</div>
<div class="a dt" style="left:462px;top:208.5px;width:55px">163.0</div>
<div class="a dt" style="left:520px;top:208.5px;width:55px">163.0</div>
<div class="a dt" style="left:578px;top:208.5px;width:55px">163.0</div>
<div class="a ht" style="left:1px;top:222px;width:51px;text-align:right">2499</div>
<div class="a dt" style="left:57px;top:222.5px;width:55px">173.0</div>
<div class="a dt" style="left:115px;top:222.5px;width:55px">172.0</div>
<div class="a dt" style="left:173px;top:222.5px;width:55px">170.0</div>
<div class="a dt" style="left:231px;top:222.5px;width:55px">165.0</div>
<div class="a dt" style="left:289px;top:222.5px;width:55px">165.0</div>
<div class="a dt" style="left:346px;top:222.5px;width:55px">164.0</div>
<div class="a dt" style="left:404px;top:222.5px;width:55px">164.0</div>
<div class="a dt" style="left:462px;top:222.5px;width:55px">163.0</div>
<div class="a dt" style="left:520px;top:222.5px;width:55px">163.0</div>
<div class="a dt" style="left:578px;top:222.5px;width:55px">163.0</div>
<div class="a ht" style="left:1px;top:236px;width:51px;text-align:right">3003</div>
<div class="a dt" style="left:57px;top:236.5px;width:55px">171.0</div>
<div class="a dt" style="left:115px;top:236.5px;width:55px">171.0</div>
<div class="a dt" style="left:173px;top:236.5px;width:55px">174.0</div>
<div class="a dt" style="left:231px;top:236.5px;width:55px">165.0</div>
<div class="a dt" style="left:289px;top:236.5px;width:55px">165.0</div>
<div class="a dt" style="left:346px;top:236.5px;width:55px">164.0</div>
<div class="a dt" style="left:404px;top:236.5px;width:55px">164.0</div>
<div class="a dt" style="left:462px;top:236.5px;width:55px">163.0</div>
<div class="a dt" style="left:520px;top:236.5px;width:55px">163.0</div>
<div class="a dt" style="left:578px;top:236.5px;width:55px">163.0</div>
<div class="a ht" style="left:1px;top:250px;width:51px;text-align:right">3507</div>
<div class="a dt" style="left:57px;top:250.5px;width:55px">172.0</div>
<div class="a dt" style="left:115px;top:250.5px;width:55px">167.0</div>
<div class="a dt" style="left:173px;top:250.5px;width:55px">164.0</div>
<div class="a dt" style="left:231px;top:250.5px;width:55px">165.0</div>
<div class="a dt" style="left:289px;top:250.5px;width:55px">165.0</div>
<div class="a dt" style="left:346px;top:250.5px;width:55px">164.0</div>
<div class="a dt" style="left:404px;top:250.5px;width:55px">164.0</div>
<div class="a dt" style="left:462px;top:250.5px;width:55px">163.0</div>
<div class="a dt" style="left:520px;top:250.5px;width:55px">163.0</div>
<div class="a dt" style="left:578px;top:250.5px;width:55px">163.0</div>
<div class="a ht" style="left:1px;top:264px;width:51px;text-align:right">3990</div>
<div class="a dt" style="left:57px;top:264.5px;width:55px">176.0</div>
<div class="a dt" style="left:115px;top:264.5px;width:55px">168.0</div>
<div class="a dt" style="left:173px;top:264.5px;width:55px">167.0</div>
<div class="a dt" style="left:231px;top:264.5px;width:55px">165.0</div>
<div class="a dt" style="left:289px;top:264.5px;width:55px">164.0</div>
<div class="a dt" style="left:346px;top:264.5px;width:55px">164.0</div>
<div class="a dt" style="left:404px;top:264.5px;width:55px">164.0</div>
<div class="a dt" style="left:462px;top:264.5px;width:55px">163.0</div>
<div class="a dt" style="left:520px;top:264.5px;width:55px">163.0</div>
<div class="a dt" style="left:578px;top:264.5px;width:55px">163.0</div>
<div class="a ht" style="left:1px;top:278px;width:51px;text-align:right">4242</div>
<div class="a dt" style="left:57px;top:278.5px;width:55px">160.0</div>
<div class="a dt" style="left:115px;top:278.5px;width:55px">162.0</div>
<div class="a dt" style="left:173px;top:278.5px;width:55px">165.0</div>
<div class="a dt" style="left:231px;top:278.5px;width:55px">165.0</div>
<div class="a dt" style="left:289px;top:278.5px;width:55px">164.0</div>
<div class="a dt" style="left:346px;top:278.5px;width:55px">164.0</div>
<div class="a dt" style="left:404px;top:278.5px;width:55px">164.0</div>
<div class="a dt" style="left:462px;top:278.5px;width:55px">163.0</div>
<div class="a dt" style="left:520px;top:278.5px;width:55px">163.0</div>
<div class="a dt" style="left:578px;top:278.5px;width:55px">163.0</div>
<div class="a ht" style="left:1px;top:292px;width:51px;text-align:right">4494</div>
<div class="a dt" style="left:57px;top:292.5px;width:55px">158.0</div>
<div class="a dt" style="left:115px;top:292.5px;width:55px">160.0</div>
<div class="a dt" style="left:173px;top:292.5px;width:55px">165.0</div>
<div class="a dt" style="left:231px;top:292.5px;width:55px">165.0</div>
<div class="a dt" style="left:289px;top:292.5px;width:55px">164.0</div>
<div class="a dt" style="left:346px;top:292.5px;width:55px">164.0</div>
<div class="a dt" style="left:404px;top:292.5px;width:55px">164.0</div>
<div class="a dt" style="left:462px;top:292.5px;width:55px">164.0</div>
<div class="a dt" style="left:520px;top:292.5px;width:55px">164.0</div>
<div class="a dt" style="left:578px;top:292.5px;width:55px">164.0</div>
<div class="a ht" style="left:1px;top:306px;width:51px;text-align:right">4746</div>
<div class="a dt" style="left:57px;top:306.5px;width:55px">155.0</div>
<div class="a dt" style="left:115px;top:306.5px;width:55px">158.0</div>
<div class="a dt" style="left:173px;top:306.5px;width:55px">163.0</div>
<div class="a dt" style="left:231px;top:306.5px;width:55px">165.0</div>
<div class="a dt" style="left:289px;top:306.5px;width:55px">164.0</div>
<div class="a dt" style="left:346px;top:306.5px;width:55px">164.0</div>
<div class="a dt" style="left:404px;top:306.5px;width:55px">164.0</div>
<div class="a dt" style="left:462px;top:306.5px;width:55px">164.0</div>
<div class="a dt" style="left:520px;top:306.5px;width:55px">164.0</div>
<div class="a dt" style="left:578px;top:306.5px;width:55px">164.0</div>
<div id="banner" class="a"><div id="btext" class="a">Premere Pag+/Pag- per scorrere le mappe affini, Invio per confermare</div></div>
<div id="status" class="a"></div>
<div class="a sd" style="left:500px"></div>
<div class="a st" style="left:503px">Mappa 1 di 2</div>
<div class="a sd" style="left:599px"></div>
<div class="a st" style="left:601px">Ind. 0x5AF80</div>
<div class="a sd" style="left:699px"></div>
<div class="a st" style="left:702px">Dim. 16x10</div>
<div class="a sd" style="left:799px"></div>
<div class="a st" style="left:802px">K = 64</div>
<div class="a sd" style="left:898px"></div>
<div class="a st" style="left:902px">Checksum: 2</div>
</body></html>
